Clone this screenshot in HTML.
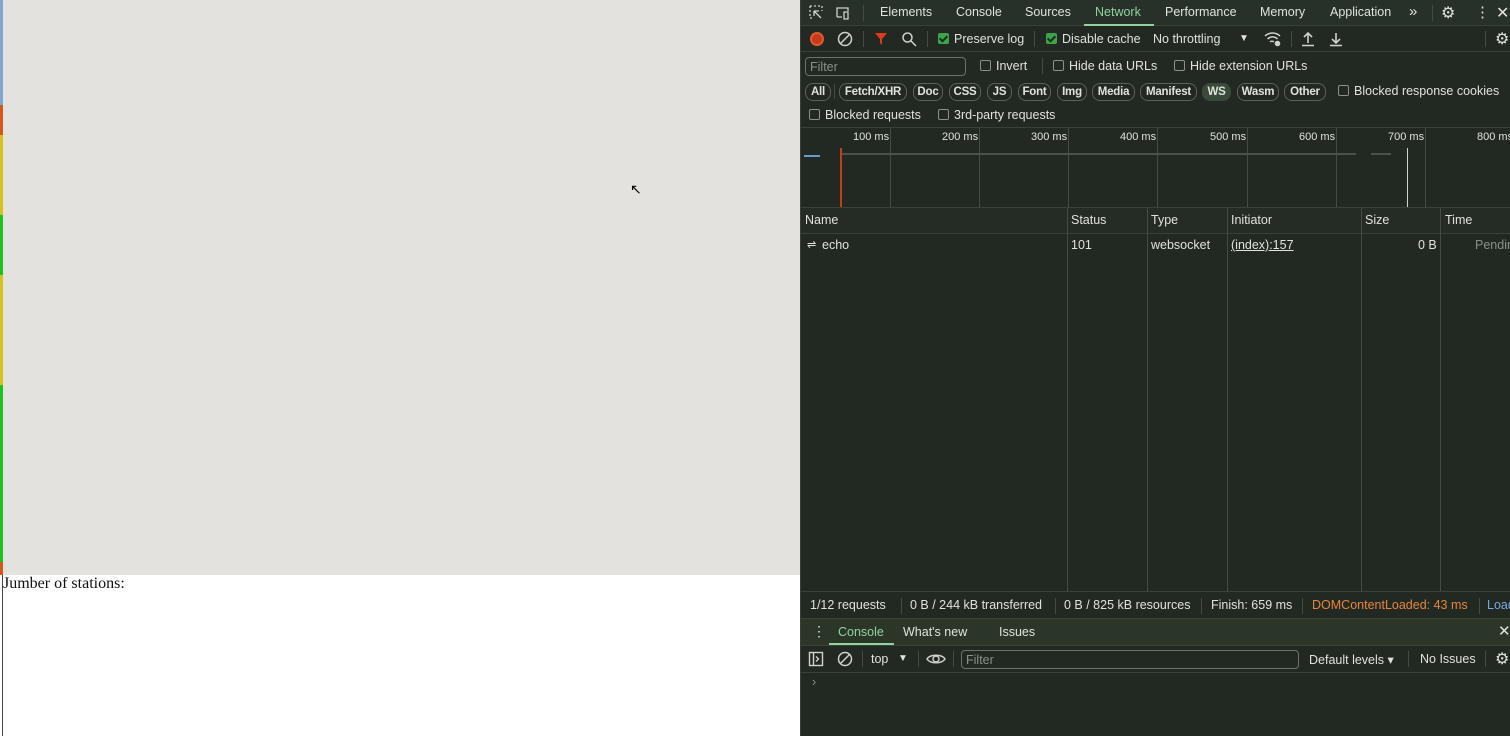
<!DOCTYPE html>
<html><head><meta charset="utf-8"><style>
*{margin:0;padding:0;box-sizing:border-box}
body{width:1510px;height:736px;overflow:hidden;position:relative;background:#fff;font-family:"Liberation Sans",sans-serif;font-size:12.5px;color:#dfe3dc}
.a{position:absolute;white-space:nowrap}
.dt{position:absolute;left:800px;top:0;width:710px;height:736px;background:#222822;border-left:1px solid #3a4038}
.cb{display:inline-block;width:11px;height:11px;border:1px solid #8a908a;border-radius:2px;vertical-align:-1px;margin-right:5px}
.cbk{display:inline-block;width:11px;height:11px;background:#3fa34a;border-radius:2px;vertical-align:-1px;margin-right:5px;position:relative}
.cbk:after{content:"";position:absolute;left:3px;top:1px;width:3px;height:6px;border:solid #132;border-width:0 2px 2px 0;transform:rotate(45deg)}
.pill{position:absolute;top:83px;height:18px;border:1px solid #5a625a;border-radius:8px;font-size:11.5px;line-height:16px;text-align:center;color:#dfe3dc;font-weight:bold;white-space:nowrap;letter-spacing:-0.2px}
.vl{position:absolute;width:1px;background:#454c45}
.ms{position:absolute;top:131px;font-size:11px;white-space:nowrap}
</style></head><body>
<div class="a" style="left:0;top:0;width:800px;height:575px;background:#e3e2de"></div>
<div class="a" style="left:0;top:0;width:3px;height:105px;background:#7fa6cf"></div>
<div class="a" style="left:0;top:105px;width:3px;height:30px;background:#d4581c"></div>
<div class="a" style="left:0;top:135px;width:3px;height:80px;background:#d4c21e"></div>
<div class="a" style="left:0;top:215px;width:3px;height:60px;background:#1ec21e"></div>
<div class="a" style="left:0;top:275px;width:3px;height:110px;background:#d4c21e"></div>
<div class="a" style="left:0;top:385px;width:3px;height:105px;background:#1ec21e"></div>
<div class="a" style="left:0;top:490px;width:3px;height:72px;background:#1ec21e"></div>
<div class="a" style="left:0;top:562px;width:3px;height:13px;background:#d4581c"></div>
<div class="a" style="left:2px;top:575px;width:1px;height:161px;background:#444"></div>
<div class="a" style="left:3px;top:575px;font-family:'Liberation Serif',serif;font-size:16px;color:#111">Jumber of stations:</div>
<div class="a" style="left:630px;top:181px;font-size:14px;color:#000">&#x2196;</div>

<div class="dt">
<div class="a" style="left:0;top:0;width:710px;height:26px;background:#28302a;border-bottom:1px solid #3a4238"></div>
<svg class="a" style="left:8px;top:5px" width="48" height="16" viewBox="0 0 48 16" fill="none" stroke="#cfd3cc" stroke-width="1.3"><path d="M1 1h2M5 1h2M9 1h2M1 1v2M1 5v2M1 9v2M1 13h2M13 1v2M13 5v1M5 6l7 7M5 6h5M5 6v5"/><path d="M28 12V3h11v3M28 12h5M35 7h4v7h-4z"/></svg>
<div class="vl" style="left:62px;top:5px;height:16px"></div>
<div class="a" style="left:79px;top:5px">Elements</div>
<div class="a" style="left:155px;top:5px">Console</div>
<div class="a" style="left:224px;top:5px">Sources</div>
<div class="a" style="left:294px;top:5px;color:#8fd3a0">Network</div>
<div class="a" style="left:283px;top:24px;width:70px;height:2px;background:#8fd3a0"></div>
<div class="a" style="left:364px;top:5px">Performance</div>
<div class="a" style="left:459px;top:5px">Memory</div>
<div class="a" style="left:529px;top:5px">Application</div>
<div class="a" style="left:608px;top:3px;font-size:15px">&#187;</div>
<div class="vl" style="left:631px;top:5px;height:16px"></div>
<div class="a" style="left:640px;top:3px;font-size:16px">&#9881;</div>
<div class="a" style="left:674px;top:3px;font-size:15px">&#8942;</div>
<div class="a" style="left:695px;top:3px;font-size:16px">&#x2715;</div>

<div class="a" style="left:0;top:27px;width:710px;height:25px;border-bottom:1px solid #3a4238"></div>
<div class="a" style="left:9px;top:32px;width:14px;height:14px;border-radius:50%;background:#c43a1a;border:2px solid #e05a30"></div>
<svg class="a" style="left:36px;top:31px" width="16" height="16" viewBox="0 0 16 16" fill="none" stroke="#cfd3cc" stroke-width="1.5"><circle cx="8" cy="8" r="6.5"/><path d="M3.5 12.5l9-9"/></svg>
<div class="vl" style="left:62px;top:31px;height:16px"></div>
<svg class="a" style="left:73px;top:32px" width="14" height="14" viewBox="0 0 14 14"><path d="M1 1h12L8 7v6L6 11V7z" fill="#e03a1a"/></svg>
<svg class="a" style="left:100px;top:31px" width="16" height="16" viewBox="0 0 16 16" fill="none" stroke="#cfd3cc" stroke-width="1.5"><circle cx="6.5" cy="6.5" r="4.5"/><path d="M10 10l5 5"/></svg>
<div class="vl" style="left:126px;top:31px;height:16px"></div>
<div class="a" style="left:137px;top:32px"><span class="cbk"></span>Preserve log</div>
<div class="vl" style="left:233px;top:31px;height:16px"></div>
<div class="a" style="left:245px;top:32px"><span class="cbk"></span>Disable cache</div>
<div class="a" style="left:352px;top:32px">No throttling</div>
<div class="a" style="left:438px;top:33px;font-size:10px">&#9660;</div>
<svg class="a" style="left:463px;top:31px" width="18" height="16" viewBox="0 0 18 16" fill="none" stroke="#cfd3cc" stroke-width="1.5"><path d="M1 5a11 11 0 0 1 15 0M3.5 8a7 7 0 0 1 10 0M6 11a3 3 0 0 1 4 0"/><circle cx="13.5" cy="12.5" r="2" fill="#cfd3cc"/></svg>
<div class="vl" style="left:490px;top:31px;height:16px"></div>
<svg class="a" style="left:500px;top:31px" width="14" height="16" viewBox="0 0 14 16" fill="none" stroke="#cfd3cc" stroke-width="1.6"><path d="M7 12V2M3 6l4-4 4 4M1 14.5h12"/></svg>
<svg class="a" style="left:528px;top:31px" width="14" height="16" viewBox="0 0 14 16" fill="none" stroke="#cfd3cc" stroke-width="1.6"><path d="M7 2v10M3 8l4 4 4-4M1 14.5h12"/></svg>
<div class="vl" style="left:684px;top:31px;height:16px"></div>
<div class="a" style="left:694px;top:29px;font-size:16px">&#9881;</div>

<div class="a" style="left:4px;top:57px;width:161px;height:19px;border:1px solid #6a726a;border-radius:4px;color:#8a908a;padding:2px 4px">Filter</div>
<div class="a" style="left:179px;top:59px"><span class="cb"></span>Invert</div>
<div class="vl" style="left:241px;top:58px;height:16px"></div>
<div class="a" style="left:252px;top:59px"><span class="cb"></span>Hide data URLs</div>
<div class="a" style="left:373px;top:59px"><span class="cb"></span>Hide extension URLs</div>

<div class="pill" style="left:4px;width:26px">All</div>
<div class="vl" style="left:33px;top:84px;height:15px"></div>
<div class="pill" style="left:38px;width:68px">Fetch/XHR</div>
<div class="pill" style="left:112px;width:30px">Doc</div>
<div class="pill" style="left:148px;width:32px">CSS</div>
<div class="pill" style="left:186px;width:25px">JS</div>
<div class="pill" style="left:217px;width:33px">Font</div>
<div class="pill" style="left:256px;width:30px">Img</div>
<div class="pill" style="left:291px;width:43px">Media</div>
<div class="pill" style="left:339px;width:57px">Manifest</div>
<div class="pill" style="left:401px;width:29px;background:#3a4a3a;border-color:#3a4a3a">WS</div>
<div class="pill" style="left:436px;width:42px">Wasm</div>
<div class="pill" style="left:483px;width:42px">Other</div>
<div class="a" style="left:537px;top:84px"><span class="cb"></span>Blocked response cookies</div>
<div class="a" style="left:8px;top:108px"><span class="cb"></span>Blocked requests</div>
<div class="a" style="left:137px;top:108px"><span class="cb"></span>3rd-party requests</div>

<div class="a" style="left:0;top:127px;width:710px;height:1px;background:#3a4238"></div>
<div class="vl" style="left:89px;top:128px;height:80px"></div>
<div class="vl" style="left:178px;top:128px;height:80px"></div>
<div class="vl" style="left:267px;top:128px;height:80px"></div>
<div class="vl" style="left:356px;top:128px;height:80px"></div>
<div class="vl" style="left:446px;top:128px;height:80px"></div>
<div class="vl" style="left:535px;top:128px;height:80px"></div>
<div class="vl" style="left:624px;top:128px;height:80px"></div>
<div class="ms" style="left:52px">100 ms</div>
<div class="ms" style="left:141px">200 ms</div>
<div class="ms" style="left:230px">300 ms</div>
<div class="ms" style="left:319px">400 ms</div>
<div class="ms" style="left:409px">500 ms</div>
<div class="ms" style="left:498px">600 ms</div>
<div class="ms" style="left:587px">700 ms</div>
<div class="ms" style="left:676px">800 ms</div>
<div class="a" style="left:40px;top:153px;width:515px;height:2px;background:#4a524a"></div>
<div class="a" style="left:570px;top:153px;width:20px;height:2px;background:#4a524a"></div>
<div class="a" style="left:3px;top:155px;width:16px;height:2px;background:#6a9ad0"></div>
<div class="a" style="left:39px;top:148px;width:2px;height:60px;background:#c0401a"></div>
<div class="a" style="left:606px;top:148px;width:1px;height:60px;background:#cfd3cc"></div>
<div class="a" style="left:0;top:207px;width:710px;height:1px;background:#3a4238"></div>

<div class="a" style="left:0;top:208px;width:710px;height:26px;background:#252b25;border-bottom:1px solid #3a4238"></div>
<div class="a" style="left:4px;top:213px">Name</div>
<div class="a" style="left:270px;top:213px">Status</div>
<div class="a" style="left:350px;top:213px">Type</div>
<div class="a" style="left:430px;top:213px">Initiator</div>
<div class="a" style="left:564px;top:213px">Size</div>
<div class="a" style="left:644px;top:213px">Time</div>
<div class="vl" style="left:266px;top:208px;height:383px"></div>
<div class="vl" style="left:346px;top:208px;height:383px"></div>
<div class="vl" style="left:426px;top:208px;height:383px"></div>
<div class="vl" style="left:560px;top:208px;height:383px"></div>
<div class="vl" style="left:639px;top:208px;height:383px"></div>
<div class="a" style="left:6px;top:238px;font-size:11px">&#8652;</div>
<div class="a" style="left:21px;top:238px">echo</div>
<div class="a" style="left:270px;top:238px">101</div>
<div class="a" style="left:350px;top:238px">websocket</div>
<div class="a" style="left:430px;top:238px;text-decoration:underline">(index):157</div>
<div class="a" style="left:617px;top:238px">0 B</div>
<div class="a" style="left:674px;top:238px;color:#8a908a">Pendin</div>

<div class="a" style="left:0;top:591px;width:710px;height:1px;background:#3a4238"></div>
<div class="a" style="left:9px;top:598px">1/12 requests</div>
<div class="vl" style="left:100px;top:598px;height:16px"></div>
<div class="a" style="left:109px;top:598px">0 B / 244 kB transferred</div>
<div class="vl" style="left:254px;top:598px;height:16px"></div>
<div class="a" style="left:263px;top:598px">0 B / 825 kB resources</div>
<div class="vl" style="left:400px;top:598px;height:16px"></div>
<div class="a" style="left:410px;top:598px">Finish: 659 ms</div>
<div class="vl" style="left:501px;top:598px;height:16px"></div>
<div class="a" style="left:511px;top:598px;color:#e8863a">DOMContentLoaded: 43 ms</div>
<div class="vl" style="left:678px;top:598px;height:16px"></div>
<div class="a" style="left:686px;top:598px;color:#7aa8e0">Load</div>

<div class="a" style="left:0;top:618px;width:710px;height:28px;background:#2b3628;border-top:1px solid #3a4238;border-bottom:1px solid #3a4238"></div>
<div class="a" style="left:11px;top:623px;font-size:14px">&#8942;</div>
<div class="a" style="left:37px;top:625px;color:#8fd3a0">Console</div>
<div class="a" style="left:28px;top:643px;width:65px;height:2px;background:#8fd3a0"></div>
<div class="a" style="left:102px;top:625px">What's new</div>
<div class="a" style="left:198px;top:625px">Issues</div>
<div class="a" style="left:697px;top:622px;font-size:15px">&#x2715;</div>

<svg class="a" style="left:7px;top:651px" width="16" height="16" viewBox="0 0 16 16" fill="none" stroke="#cfd3cc" stroke-width="1.4"><rect x="1.5" y="1.5" width="13" height="13"/><path d="M5.5 1.5v13M8 5.5l2.5 2.5L8 10.5"/></svg>
<svg class="a" style="left:36px;top:651px" width="16" height="16" viewBox="0 0 16 16" fill="none" stroke="#cfd3cc" stroke-width="1.5"><circle cx="8" cy="8" r="6.5"/><path d="M3.5 12.5l9-9"/></svg>
<div class="vl" style="left:61px;top:651px;height:16px"></div>
<div class="a" style="left:70px;top:652px">top</div>
<div class="a" style="left:97px;top:653px;font-size:10px">&#9660;</div>
<div class="vl" style="left:117px;top:651px;height:16px"></div>
<svg class="a" style="left:125px;top:651px" width="20" height="16" viewBox="0 0 20 16" fill="none" stroke="#cfd3cc" stroke-width="1.4"><path d="M1 8c3-5 15-5 18 0c-3 5-15 5-18 0z"/><circle cx="10" cy="8" r="3"/></svg>
<div class="vl" style="left:152px;top:651px;height:16px"></div>
<div class="a" style="left:160px;top:650px;width:338px;height:19px;border:1px solid #6a726a;border-radius:4px;color:#8a908a;padding:2px 4px">Filter</div>
<div class="a" style="left:508px;top:652px">Default levels &#9662;</div>
<div class="vl" style="left:607px;top:651px;height:16px"></div>
<div class="a" style="left:619px;top:652px">No Issues</div>
<div class="vl" style="left:684px;top:651px;height:16px"></div>
<div class="a" style="left:694px;top:649px;font-size:16px">&#9881;</div>
<div class="a" style="left:0;top:672px;width:710px;height:1px;background:#3a4238"></div>
<div class="a" style="left:11px;top:675px;color:#8a908a">&#8250;</div>
</div>
</body></html>
